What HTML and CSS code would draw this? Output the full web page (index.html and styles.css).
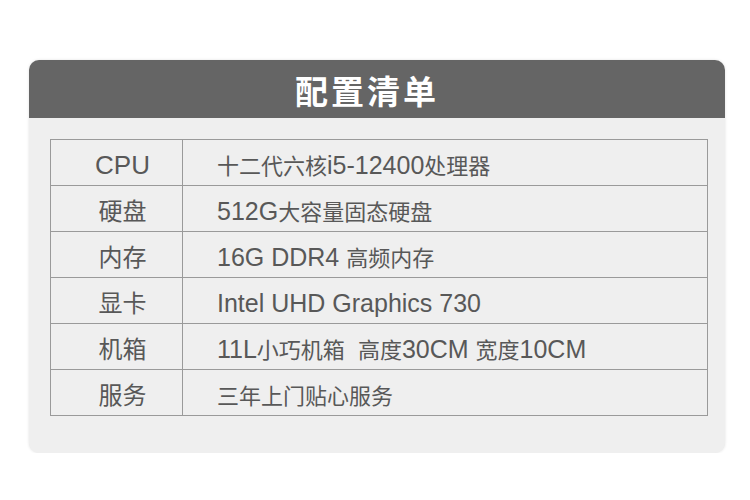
FILE: index.html
```html
<!DOCTYPE html>
<html lang="zh-CN">
<head>
<meta charset="utf-8">
<link rel="stylesheet" href="styles.css">
</head>
<body>
<div class="card">
  <div class="card-head">配置清单</div>
  <div class="card-body">
    <table class="spec">
      <tr><td class="k"><span class="en-k">CPU</span></td><td class="v">十二代六核<span class="en">i5-12400</span>处理器</td></tr>
      <tr><td class="k">硬盘</td><td class="v"><span class="en">512G</span>大容量固态硬盘</td></tr>
      <tr><td class="k">内存</td><td class="v"><span class="en">16G DDR4 </span>高频内存</td></tr>
      <tr><td class="k">显卡</td><td class="v"><span class="en">Intel UHD Graphics 730</span></td></tr>
      <tr><td class="k">机箱</td><td class="v"><span class="en">11L</span>小巧机箱<span class="gap"></span>高度<span class="en">30CM </span>宽度<span class="en">10CM</span></td></tr>
      <tr><td class="k">服务</td><td class="v">三年上门贴心服务</td></tr>
    </table>
  </div>
</div>
</body>
</html>
```

FILE: styles.css
```css
html, body {
  margin: 0;
  padding: 0;
  background: #ffffff;
}

body {
  font-family: "Liberation Sans", "Noto Sans CJK SC", sans-serif;
  color: #585858;
}

.card {
  margin: 60px 0 0 29px;
  width: 696px;
  border-radius: 10px;
  background: #efefef;
  box-shadow: 0 0 3px rgba(0, 0, 0, 0.12);
  overflow: hidden;
}

.card-head {
  height: 58px;
  background: #656565;
  color: #ffffff;
  font-family: "Noto Sans CJK SC", sans-serif;
  font-weight: 700;
  font-size: 33px;
  letter-spacing: 3px;
  line-height: 60px;
  text-align: center;
  padding-right: 20px;
}

.card-body {
  padding: 21px 17px 37px 21px;
}

.spec {
  width: 658px;
  border-collapse: collapse;
}

.spec td {
  border: 1px solid #9a9a9a;
  height: 46px;
  padding: 2px 0 0 0;
  vertical-align: middle;
  box-sizing: border-box;
}

.k {
  width: 132px;
  text-align: center;
  padding-left: 12px !important;
  font-family: "Noto Sans CJK SC", sans-serif;
  font-size: 24px;
}

.en-k {
  font-family: "Liberation Sans", sans-serif;
  font-size: 26px;
}

.v {
  padding-left: 34px !important;
  font-family: "Noto Sans CJK SC", sans-serif;
  font-size: 22px;
  white-space: nowrap;
}

.en {
  font-family: "Liberation Sans", sans-serif;
  font-size: 25px;
  white-space: pre;
}

.gap {
  display: inline-block;
  width: 13px;
}
```
